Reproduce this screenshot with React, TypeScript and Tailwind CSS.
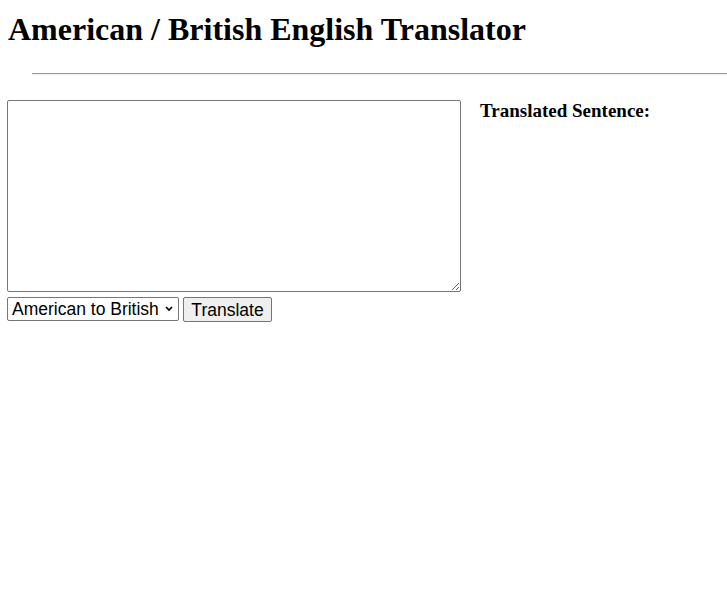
import React from "react";

export default function App() {
  return (
    <div className="min-h-[606px] bg-white text-black px-[8px] pt-[11px]" style={{ fontFamily: '"Liberation Serif", serif' }}>
      <h1 className="text-[32px] font-bold leading-[36px] m-0">American / British English Translator</h1>
      <div className="mt-[26px] ml-[24px] -mr-[8px] h-[2px] border-t border-t-[#9a9a9a] border-b border-b-[#eeeeee] box-border" />
      <div className="flex mt-[25px] -ml-[1px]">
        <div className="flex flex-col">
          <textarea
            className="w-[454px] h-[192px] border border-[#767676] rounded-[2px] bg-white resize p-[2px] outline-none"
            style={{ fontFamily: '"Liberation Mono", monospace', fontSize: 13 }}
          />
          <div className="flex items-start gap-[4px] mt-[5px]" style={{ fontFamily: '"Liberation Sans", Arial, sans-serif' }}>
            <div className="relative w-[172px] h-[24px] border border-[#767676] rounded-[2px] bg-white flex items-center">
              <span className="text-[17.5px] leading-[20px] pl-[4px] text-black">American to British</span>
              <svg className="absolute right-[5px] top-[8px]" width="8" height="6" viewBox="0 0 8 6">
                <path d="M1 1 L4 4 L7 1" stroke="#000" strokeWidth="1.7" fill="none" />
              </svg>
            </div>
            <button className="w-[89px] h-[25px] border border-[#767676] rounded-[2px] bg-[#efefef] text-[17.5px] leading-[20px] text-black flex items-center justify-center">
              Translate
            </button>
          </div>
        </div>
        <div className="ml-[19px]">
          <h3 className="text-[19px] font-bold leading-[22px] m-0">Translated Sentence:</h3>
        </div>
      </div>
    </div>
  );
}
